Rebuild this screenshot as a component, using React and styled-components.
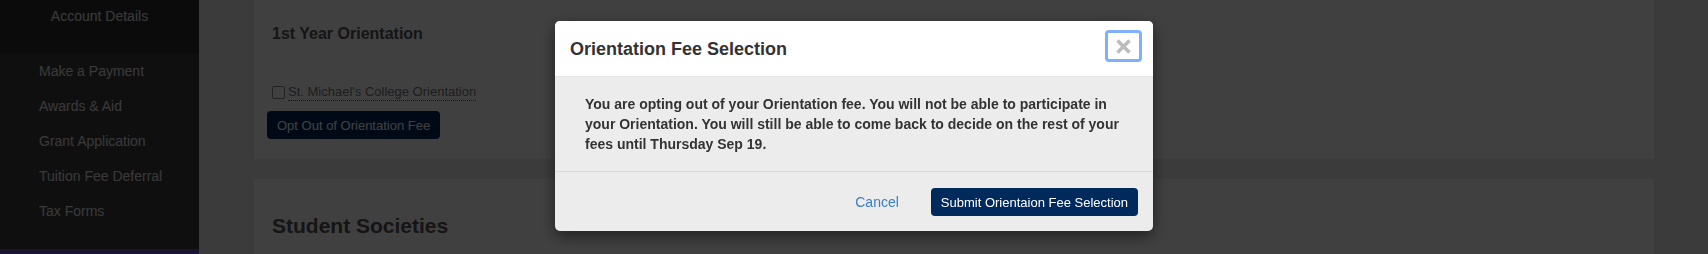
import React from "react";
import styled, { createGlobalStyle } from "styled-components";

const Global = createGlobalStyle`
  html, body { margin: 0; padding: 0; height: 254px; overflow: hidden; }
  body { font-family: "Liberation Sans", Arial, Helvetica, sans-serif; background: #ececec; }
  #root { height: 254px; }
`;

const Page = styled.div`
  display: flex;
  height: 254px;
  overflow: hidden;
`;

const Sidebar = styled.aside`
  width: 199px;
  flex: 0 0 199px;
  background: #3c3c3c;
  display: flex;
  flex-direction: column;
`;

const SideTop = styled.div`
  height: 53px;
  box-sizing: border-box;
  padding-top: 6px;
  background: #2c2c2c;
  color: #e8e8e8;
  font-size: 14px;
  line-height: 20px;
  text-align: center;
`;

const SideMenu = styled.ul`
  list-style: none;
  margin: 0;
  padding: 1px 0 0 39px;
  flex: 1;
`;

const SideItem = styled.li`
  font-size: 14px;
  line-height: 35px;
  color: #e2e2e2;
`;

const SideBand = styled.div`
  height: 5px;
  background: #6e52c2;
`;

const Main = styled.main`
  flex: 1;
  padding-left: 55px;
  display: flex;
  flex-direction: column;
  gap: 20px;
`;

const Card = styled.section`
  width: 1400px;
  box-sizing: border-box;
  background: #ffffff;
  padding: ${(p) => p.$pad};
  display: flex;
  flex-direction: column;
  align-items: flex-start;
`;

const CardTitle = styled.h3`
  margin: 0 0 0 18px;
  font-size: 16px;
  line-height: 18px;
  font-weight: bold;
  color: #555;
`;

const BigTitle = styled.h2`
  margin: 0 0 0 18px;
  font-size: 21px;
  line-height: 24px;
  font-weight: bold;
  color: #555;
`;

const CheckRow = styled.label`
  display: flex;
  align-items: center;
  gap: 3px;
  margin: 41px 0 0 18px;
  font-size: 13px;
  line-height: 18px;
  color: #777;
`;

const Box = styled.span`
  width: 11px;
  height: 11px;
  border: 1px solid #8a8a8a;
  border-radius: 2px;
  background: #fff;
`;

const Dotted = styled.span`
  border-bottom: 1px dotted #555;
  line-height: 16px;
`;

const NavyButton = styled.button`
  margin: ${(p) => p.$m || "0"};
  height: 28px;
  padding: 0 ${(p) => p.$px || 10}px;
  border: none;
  border-radius: 4px;
  background: #002a5c;
  color: #ffffff;
  font-family: "Liberation Sans", Arial, Helvetica, sans-serif;
  font-size: 13px;
  cursor: pointer;
`;

const Backdrop = styled.div`
  position: fixed;
  inset: 0;
  background: rgba(0, 0, 0, 0.75);
  display: flex;
  justify-content: center;
  align-items: flex-start;
  padding-top: 21px;
`;

const Modal = styled.div`
  width: 598px;
  border-radius: 5px;
  overflow: hidden;
  background: #ececec;
  box-shadow: 0 5px 15px rgba(0, 0, 0, 0.5);
`;

const ModalHeader = styled.div`
  height: 56px;
  box-sizing: border-box;
  background: #fff;
  border-bottom: 1px solid #e3e3e3;
  display: flex;
  justify-content: space-between;
  align-items: flex-start;
  padding: 0 11px 0 15px;
`;

const ModalTitle = styled.h4`
  margin: 0;
  font-size: 18px;
  line-height: 56px;
  font-weight: bold;
  color: #333;
`;

const CloseButton = styled.button`
  margin-top: 9px;
  width: 37px;
  height: 32px;
  box-sizing: border-box;
  border: 3px solid #7fb0f8;
  border-radius: 4px;
  background: #fff;
  display: flex;
  align-items: center;
  justify-content: center;
  padding: 0;
`;

const ModalBody = styled.div`
  padding: 17px 30px 17px;
  font-size: 14px;
  line-height: 20px;
  font-weight: bold;
  color: #333;
  border-bottom: 1px solid #d9d9d9;
`;

const ModalFooter = styled.div`
  display: flex;
  justify-content: flex-end;
  align-items: center;
  gap: 32px;
  padding: 16px 15px 15px;
`;

const LinkButton = styled.button`
  border: none;
  background: none;
  padding: 0;
  font-family: "Liberation Sans", Arial, Helvetica, sans-serif;
  font-size: 14px;
  color: #3b7dc6;
  cursor: pointer;
`;

const menu = ["Make a Payment", "Awards & Aid", "Grant Application", "Tuition Fee Deferral", "Tax Forms"];

export default function App() {
  return (
    <>
      <Global />
      <Page>
        <Sidebar>
          <SideTop>Account Details</SideTop>
          <SideMenu>
            {menu.map((m) => (
              <SideItem key={m}>{m}</SideItem>
            ))}
          </SideMenu>
          <SideBand />
        </Sidebar>
        <Main>
          <Card $pad="25px 0 20px 0">
            <CardTitle>1st Year Orientation</CardTitle>
            <CheckRow>
              <Box />
              <Dotted>St. Michael's College Orientation</Dotted>
            </CheckRow>
            <NavyButton $m="10px 0 0 13px" $px={10}>Opt Out of Orientation Fee</NavyButton>
          </Card>
          <Card $pad="35px 0 40px 0">
            <BigTitle>Student Societies</BigTitle>
          </Card>
        </Main>
      </Page>
      <Backdrop>
        <Modal>
          <ModalHeader>
            <ModalTitle>Orientation Fee Selection</ModalTitle>
            <CloseButton aria-label="Close">
              <svg width="17" height="17" viewBox="0 0 17 17">
                <path d="M2.5 2.5 L14.5 14.5 M14.5 2.5 L2.5 14.5" stroke="#bcbcbc" strokeWidth="3.6" strokeLinecap="butt" />
              </svg>
            </CloseButton>
          </ModalHeader>
          <ModalBody>
            You are opting out of your Orientation fee. You will not be able to participate in your
            Orientation. You will still be able to come back to decide on the rest of your fees until
            Thursday Sep 19.
          </ModalBody>
          <ModalFooter>
            <LinkButton>Cancel</LinkButton>
            <NavyButton $px={10}>Submit Orientaion Fee Selection</NavyButton>
          </ModalFooter>
        </Modal>
      </Backdrop>
    </>
  );
}
